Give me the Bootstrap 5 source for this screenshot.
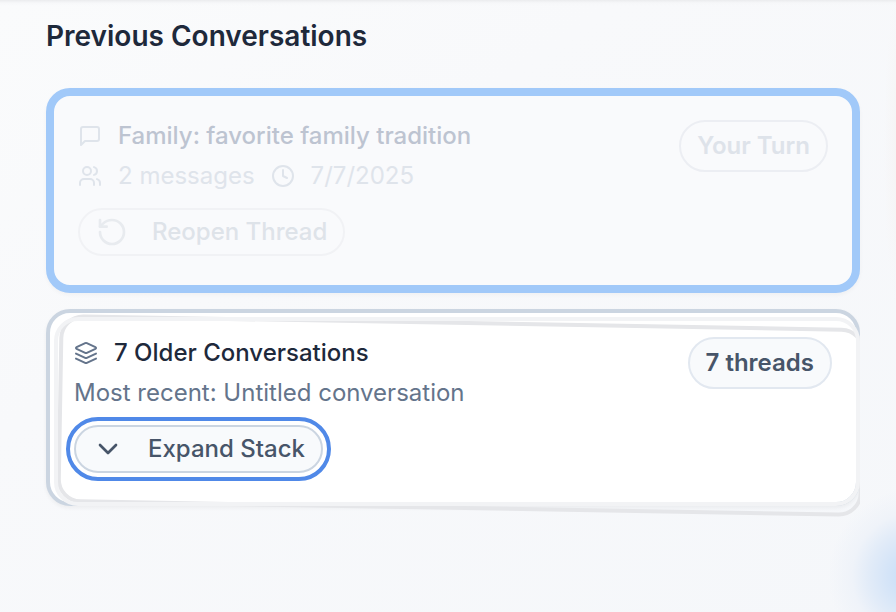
<!DOCTYPE html>
<html lang="en">
<head>
<meta charset="utf-8">
<meta name="viewport" content="width=device-width, initial-scale=1">
<title>Previous Conversations</title>
<link rel="stylesheet" href="https://cdn.jsdelivr.net/npm/bootstrap@5.3.0/dist/css/bootstrap.min.css">
<script src="https://cdn.jsdelivr.net/npm/bootstrap@5.3.0/dist/js/bootstrap.bundle.min.js" defer></script>
<style>
html, body { height: 100%; overflow: hidden; }
body {
  font-family: Inter, sans-serif; font-size: 24px; line-height: 32px;
  background:
    radial-gradient(circle at 916px 576px, #c3dbf7 0, #d0e2f8 22px, #e1ebf8 46px, #eff3f9 64px, rgba(246,248,250,0) 88px),
    linear-gradient(180deg, #ebecee 0, rgba(245,246,248,.6) 3px, rgba(249,250,251,0) 6px),
    radial-gradient(ellipse 14px 160px at 898px 150px, #f5f4f4 0, rgba(246,246,246,0) 100%),
    linear-gradient(145deg, #fafbfc 0%, #f8f9fb 35%, #f5f7fa 100%);
}
.page-pane { padding: 16px 36px 0 46px; }
.page-title { font-size: 28px; line-height: 40px; font-weight: 600; color: #1e293b; margin-bottom: 32px; }
.thread-card { height: 205px; border: 8px solid #a1c9f9; border-radius: 24px; padding: 24px; background: #f9fafc; margin-bottom: 16px; box-shadow: 0 2px 4px rgba(0,0,0,.035); }
.stack-card { height: 197px; border: 4px solid #cbd5e1; border-radius: 24px; padding: 24px; background: #fff; box-shadow: 0 2px 4px rgba(0,0,0,.05); }
.stack-clip { clip-path: inset(-8px 0 -24px -8px); }
.sheet { inset: 0; border: 4px solid #f2f3f5; border-radius: 24px; transform: translate(4px, 4px); }
.sheet-back { border-color: #e5e6e9; transform: translate(8px, 8px) rotate(1deg); }
.icon-gap { gap: 16px; }
.row-gap8 { gap: 8px; }
.ic { width: 24px; height: 24px; flex: none; fill: none; stroke: currentColor; stroke-width: 2; stroke-linecap: round; stroke-linejoin: round; }
.ic-lg { width: 32px; height: 32px; }
.fw-title { font-weight: 500; }
.ink { color: #1e293b; }
.faded { color: #dfe4eb; }
.faded-title { color: #bdc4d1; }
.muted { color: #64748b; }
.pill { height: 52px; padding: 0 16px; border: 2px solid #e2e8f0; border-radius: 26px; font-weight: 600; color: #475569; background: #f8fafc; }
.pill-faded { color: #dee3ea; border-color: #eceef3; background: transparent; }
.action { --bs-btn-padding-y: 0; --bs-btn-padding-x: 16px; --bs-btn-font-size: 24px; --bs-btn-font-weight: 500; --bs-btn-border-width: 2px; --bs-btn-border-radius: 24px; height: 48px; gap: 24px; margin-top: 8px; line-height: 32px;
  --bs-btn-color: #475569; --bs-btn-bg: #f8fafc; --bs-btn-border-color: #cbd5e1; }
.action-faded { --bs-btn-color: #dee3e9; --bs-btn-bg: transparent; --bs-btn-border-color: #f1f2f5; }
.action-faded .ic { color: #e8ebef; }
.action-focus { outline: 4px solid #5089e8; outline-offset: 4px; }
</style>
</head>
<body>
<main class="page-pane">
  <h2 class="page-title">Previous Conversations</h2>

  <section class="thread-card d-flex justify-content-between align-items-start">
    <div class="d-flex flex-column align-items-start row-gap8">
      <div class="d-flex align-items-center icon-gap faded">
        <svg class="ic" viewBox="0 0 24 24"><path d="M21 15a2 2 0 0 1-2 2H7l-4 4V5a2 2 0 0 1 2-2h14a2 2 0 0 1 2 2z"/></svg>
        <span class="fw-title faded-title">Family: favorite family tradition</span>
      </div>
      <div class="d-flex align-items-center icon-gap faded">
        <svg class="ic" viewBox="0 0 24 24"><path d="M16 21v-2a4 4 0 0 0-4-4H6a4 4 0 0 0-4 4v2"/><circle cx="9" cy="7" r="4"/><path d="M22 21v-2a4 4 0 0 0-3-3.87"/><path d="M16 3.13a4 4 0 0 1 0 7.75"/></svg>
        <span>2 messages</span>
        <svg class="ic" viewBox="0 0 24 24"><circle cx="12" cy="12" r="10"/><path d="M12 6v6l4 2"/></svg>
        <span>7/7/2025</span>
      </div>
      <button type="button" class="btn action action-faded d-flex align-items-center">
        <svg class="ic ic-lg" viewBox="0 0 24 24"><path d="M3 12a9 9 0 1 0 9-9 9.75 9.75 0 0 0-6.74 2.74L3 8"/><path d="M3 3v5h5"/></svg>
        <span>Reopen Thread</span>
      </button>
    </div>
    <span class="pill pill-faded d-flex align-items-center">Your Turn</span>
  </section>

  <div class="stack-clip">
    <section class="stack-card position-relative">
      <div class="sheet sheet-back position-absolute"></div>
      <div class="sheet position-absolute"></div>
      <div class="d-flex justify-content-between align-items-start position-relative">
        <div class="d-flex flex-column align-items-start row-gap8">
          <div class="d-flex align-items-center icon-gap muted">
            <svg class="ic" viewBox="0 0 24 24"><path d="m12.83 2.18a2 2 0 0 0-1.66 0L2.6 6.08a1 1 0 0 0 0 1.83l8.58 3.91a2 2 0 0 0 1.66 0l8.58-3.9a1 1 0 0 0 0-1.83Z"/><path d="m22 17.65-9.17 4.16a2 2 0 0 1-1.66 0L2 17.65"/><path d="m22 12.65-9.17 4.16a2 2 0 0 1-1.66 0L2 12.65"/></svg>
            <span class="fw-title ink">7 Older Conversations</span>
          </div>
          <div class="muted">Most recent: Untitled conversation</div>
          <button type="button" class="btn action action-focus d-flex align-items-center">
            <svg class="ic ic-lg" viewBox="0 0 24 24"><path d="m6 9 6 6 6-6"/></svg>
            <span>Expand Stack</span>
          </button>
        </div>
        <span class="pill d-flex align-items-center">7 threads</span>
      </div>
    </section>
  </div>
</main>
</body>
</html>
